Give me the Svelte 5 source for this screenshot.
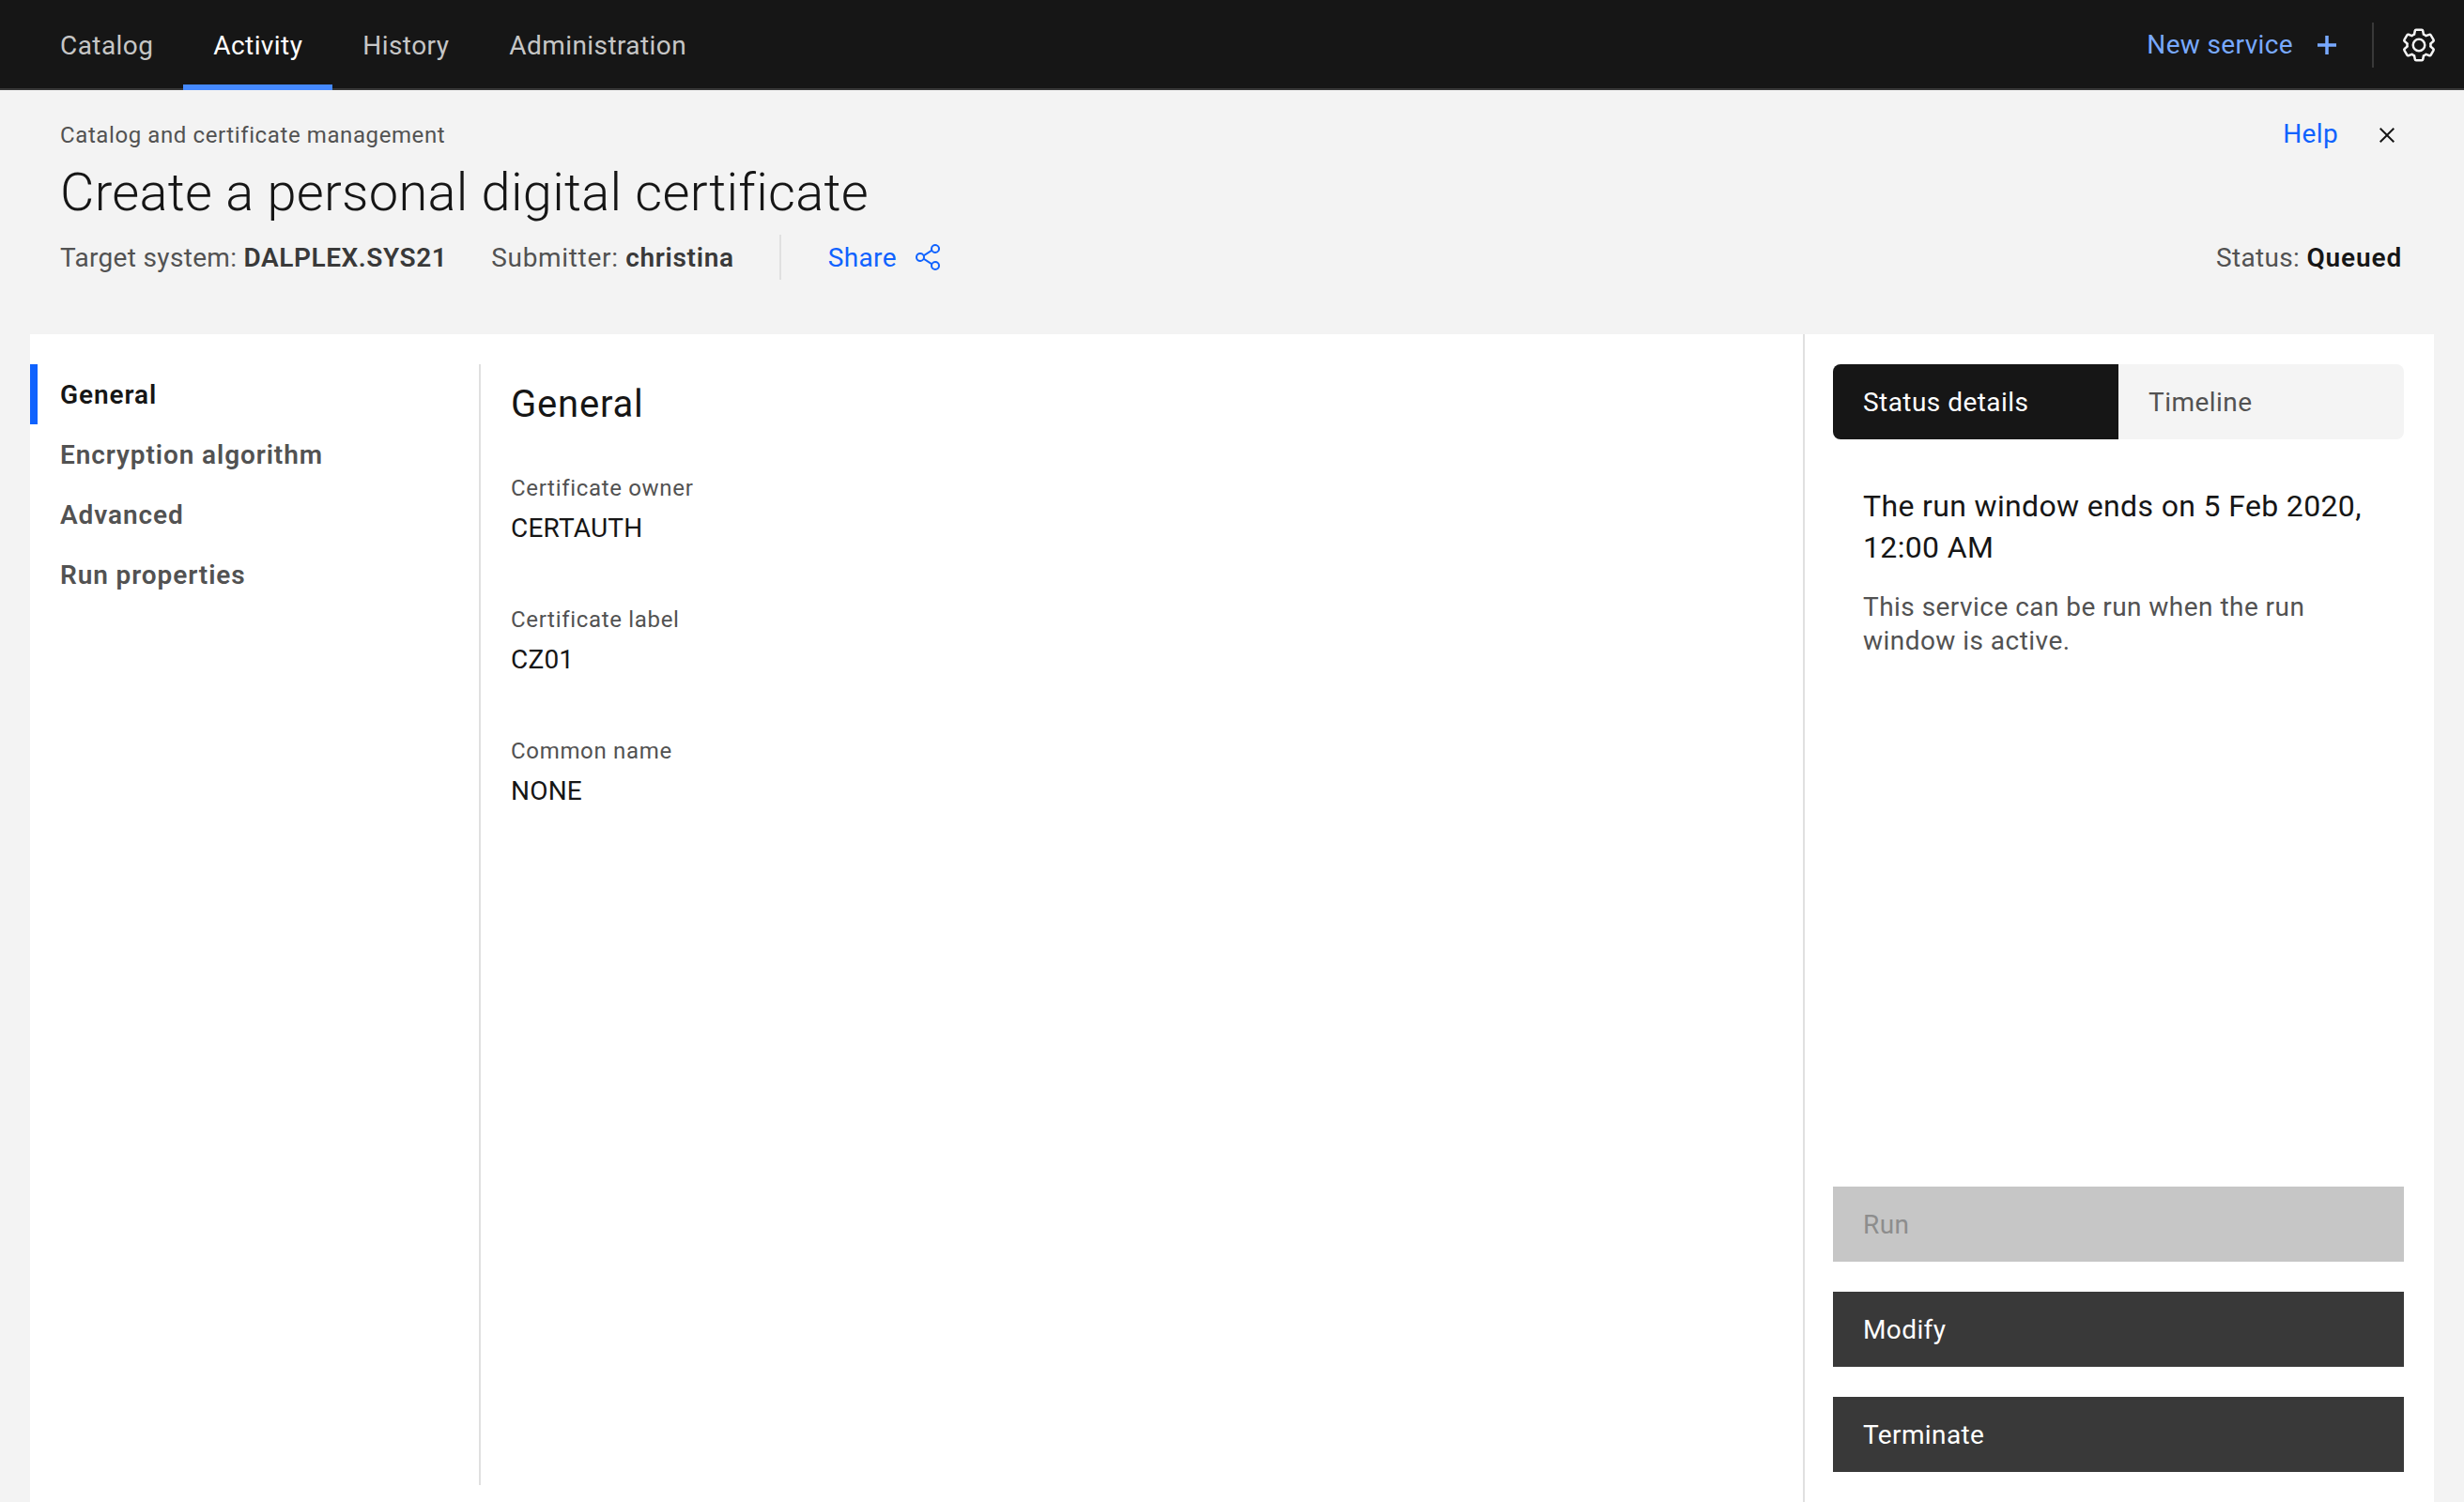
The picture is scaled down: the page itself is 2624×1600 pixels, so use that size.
<script>
  const tabs = ['Catalog', 'Activity', 'History', 'Administration'];
  const sections = ['General', 'Encryption algorithm', 'Advanced', 'Run properties'];
  const fields = [
    { label: 'Certificate owner', value: 'CERTAUTH' },
    { label: 'Certificate label', value: 'CZ01' },
    { label: 'Common name', value: 'NONE' }
  ];
</script>

<div class="page">
  <header class="topbar">
    <nav class="tabs">
      {#each tabs as t}
        <a class="tab" class:active={t === 'Activity'} href="#{t}">{t}</a>
      {/each}
    </nav>
    <div class="top-actions">
      <span class="new">New service</span>
      <svg class="plus" viewBox="0 0 20 20" width="20" height="20"><path d="M8.25 0h3.5v8.25h8.25v3.5h-8.25v8.25h-3.5v-8.25H0v-3.5h8.25z" fill="#78a9ff"/></svg>
      <span class="vsep"></span>
      <svg class="gear" viewBox="0 0 32 32" width="40" height="40" fill="#f4f4f4">
        <path d="M27,16.76c0-.25,0-.5,0-.76s0-.51,0-.77l1.92-1.68A2,2,0,0,0,29.3,11L26.94,7a2,2,0,0,0-1.73-1,2,2,0,0,0-.64.1l-2.43.82a11.35,11.35,0,0,0-1.31-.75l-.51-2.52a2,2,0,0,0-2-1.61H13.64a2,2,0,0,0-2,1.61l-.51,2.52a11.48,11.48,0,0,0-1.32.75L7.43,6.06A2,2,0,0,0,6.79,6,2,2,0,0,0,5.06,7L2.7,11a2,2,0,0,0,.41,2.51L5,15.24c0,.25,0,.5,0,.76s0,.51,0,.77L3.11,18.45A2,2,0,0,0,2.7,21L5.06,25a2,2,0,0,0,1.73,1,2,2,0,0,0,.64-.1l2.43-.82a11.35,11.35,0,0,0,1.31.75l.51,2.52a2,2,0,0,0,2,1.61h4.72a2,2,0,0,0,2-1.61l.51-2.52a11.48,11.48,0,0,0,1.32-.75l2.42.82a2,2,0,0,0,.64.1,2,2,0,0,0,1.73-1L29.3,21a2,2,0,0,0-.41-2.51ZM25.21,24l-3.43-1.16a8.86,8.86,0,0,1-2.71,1.57L18.36,28H13.64l-.71-3.55a9.36,9.36,0,0,1-2.7-1.57L6.79,24,4.43,20l2.72-2.4a8.9,8.9,0,0,1,0-3.13L4.43,12,6.79,8l3.43,1.16a8.86,8.86,0,0,1,2.71-1.57L13.64,4h4.72l.71,3.55a9.36,9.36,0,0,1,2.7,1.57L25.21,8,27.57,12l-2.72,2.4a8.9,8.9,0,0,1,0,3.13L27.57,20Z"/>
        <path d="M16,22a6,6,0,1,1,6-6A5.94,5.94,0,0,1,16,22Zm0-10a3.91,3.91,0,0,0-4,4,3.91,3.91,0,0,0,4,4,3.91,3.91,0,0,0,4-4A3.91,3.91,0,0,0,16,12Z"/>
      </svg>
    </div>
  </header>

  <section class="head">
    <div class="crumb-row">
      <span class="crumb">Catalog and certificate management</span>
      <div class="help">
        <a href="#help" class="link">Help</a>
        <svg viewBox="0 0 32 32" width="32" height="32" fill="#161616"><polygon points="24 9.4 22.6 8 16 14.6 9.4 8 8 9.4 14.6 16 8 22.6 9.4 24 16 17.4 22.6 24 24 22.6 17.4 16 24 9.4"/></svg>
      </div>
    </div>
    <h1>Create a personal digital certificate</h1>
    <div class="meta">
      <span class="m1">Target system: <b>DALPLEX.SYS21</b></span>
      <span class="m2">Submitter: <b>christina</b></span>
      <span class="msep"></span>
      <a href="#share" class="link share">Share
        <svg viewBox="0 0 32 32" width="32" height="32" fill="#0f62fe"><path d="M23,20a5,5,0,0,0-3.89,1.89L11.8,17.32a4.46,4.46,0,0,0,0-2.64l7.31-4.57A5,5,0,1,0,18,7a4.79,4.79,0,0,0,.2,1.32l-7.31,4.57a5,5,0,1,0,0,6.22l7.31,4.57A4.79,4.79,0,0,0,18,25a5,5,0,1,0,5-5ZM23,4a3,3,0,1,1-3,3A3,3,0,0,1,23,4ZM7,19a3,3,0,1,1,3-3A3,3,0,0,1,7,19Zm16,9a3,3,0,1,1,3-3A3,3,0,0,1,23,28Z"/></svg>
      </a>
      <span class="status">Status: <b>Queued</b></span>
    </div>
  </section>

  <main class="panel">
    <aside class="side">
      {#each sections as s, i}
        <div class="side-item" class:current={i === 0}>{s}</div>
      {/each}
    </aside>
    <div class="content">
      <h2>General</h2>
      {#each fields as f}
        <div class="field">
          <div class="flabel">{f.label}</div>
          <div class="fvalue">{f.value}</div>
        </div>
      {/each}
    </div>
    <aside class="right">
      <div class="switch">
        <div class="sw on">Status details</div>
        <div class="sw">Timeline</div>
      </div>
      <div class="info">
        <p class="lead">The run window ends on 5 Feb 2020, 12:00 AM</p>
        <p class="sub">This service can be run when the run window is active.</p>
      </div>
      <div class="buttons">
        <div class="btn off">Run</div>
        <div class="btn">Modify</div>
        <div class="btn">Terminate</div>
      </div>
    </aside>
  </main>
</div>

<style>
  :global(body) { margin: 0; background: #f3f3f3; }
  .page {
    width: 2624px; height: 1600px; overflow: hidden; display: flex; flex-direction: column;
    font-family: "Roboto", "Noto Sans", sans-serif; font-size: 28px; color: #161616; background: #f3f3f3;
  }
  a { text-decoration: none; }
  .topbar {
    height: 96px; box-sizing: border-box; flex: none; background: #161616; border-bottom: 2px solid #393939;
    display: flex; justify-content: space-between; align-items: stretch;
  }
  .tabs { display: flex; padding-left: 32px; }
  .tab {
    height: 96px; box-sizing: border-box; padding: 0 32px; line-height: 98px; color: #c6c6c6;
    letter-spacing: 0.42px; border-bottom: 6px solid transparent;
  }
  .tab.active { color: #fff; border-bottom-color: #4589ff; }
  .top-actions { display: flex; align-items: center; height: 96px; padding-right: 28px; }
  .new { color: #78a9ff; letter-spacing: 0.36px; line-height: 98px; }
  .plus { margin-left: 26px; }
  .vsep { width: 2px; height: 48px; background: #393939; margin-left: 38px; margin-right: 29px; margin-top: 0; }
  .gear { margin-left: -1px; }
  .head { height: 260px; flex: none; box-sizing: border-box; padding: 32px 66px 0 64px; }
  .crumb-row { display: flex; justify-content: space-between; height: 32px; align-items: center; }
  .crumb { font-size: 24px; color: #525252; letter-spacing: 0.6px; }
  .help { display: flex; align-items: center; }
  .help .link { margin-top: -4px; }
  .link { color: #0f62fe; letter-spacing: 0.36px; }
  .help svg { margin-left: 36px; margin-right: 0; }
  h1 { font-size: 56px; font-weight: 300; margin: 0; line-height: 72px; height: 72px; margin-top: 9px; letter-spacing: 0.27px; }
  .meta { display: flex; align-items: center; height: 48px; margin-top: 9px; color: #525252; letter-spacing: 0.32px; }
  .meta b { font-weight: 600; color: #393939; }
  .m1 b { letter-spacing: 0.55px; }
  .m2 { margin-left: 47px; letter-spacing: 0.68px; }
  .msep { width: 2px; height: 48px; background: #e0e0e0; margin-left: 48px; margin-right: 50px; }
  .share { display: flex; align-items: center; gap: 18px; }
  .status { margin-left: auto; }
  .status b { color: #161616; letter-spacing: 0.85px; }

  .panel { flex: 1; margin: 0 32px; background: #fff; display: flex; min-height: 0; }
  .side { width: 478px; flex: none; padding-top: 32px; box-sizing: border-box; }
  .side-item {
    height: 64px; line-height: 66px; box-sizing: border-box; padding-left: 24px; border-left: 8px solid transparent;
    font-weight: 600; color: #525252; letter-spacing: 0.9px;
  }
  .side-item.current { color: #161616; border-left-color: #0f62fe; }
  .content { flex: 1; margin: 32px 0 18px; border-left: 2px solid #e0e0e0; padding: 17px 32px 0; }
  h2 { font-size: 40px; font-weight: 400; line-height: 52px; margin: 0 0 47px; letter-spacing: 0.8px; }
  .field { margin-bottom: 64px; }
  .flabel { font-size: 24px; line-height: 32px; color: #525252; letter-spacing: 0.68px; margin-bottom: 9px; }
  .fvalue { font-size: 28px; line-height: 36px; letter-spacing: 0.2px; margin-bottom: -1px; }

  .right {
    width: 672px; flex: none; box-sizing: border-box; border-left: 2px solid #e0e0e0; padding: 32px 32px 32px 30px;
    display: flex; flex-direction: column;
  }
  .switch { display: flex; height: 80px; background: #f4f4f4; border-radius: 8px; overflow: hidden; flex: none; }
  .sw { width: 304px; box-sizing: border-box; padding-left: 32px; line-height: 82px; color: #525252; letter-spacing: 0.45px; }
  .sw.on { background: #161616; color: #fff; }
  .info { padding: 49px 32px 0; }
  .lead { font-size: 32px; line-height: 44px; margin: 0 0 24px; letter-spacing: 0.35px; }
  .sub { font-size: 28px; line-height: 36px; margin: 0; color: #525252; letter-spacing: 0.46px; }
  .buttons { margin-top: auto; display: flex; flex-direction: column; gap: 32px; }
  .btn { height: 80px; line-height: 82px; padding-left: 32px; background: #393939; color: #fff; letter-spacing: 0.4px; }
  .btn.off { background: #c6c6c6; color: #8d8d8d; }
</style>
